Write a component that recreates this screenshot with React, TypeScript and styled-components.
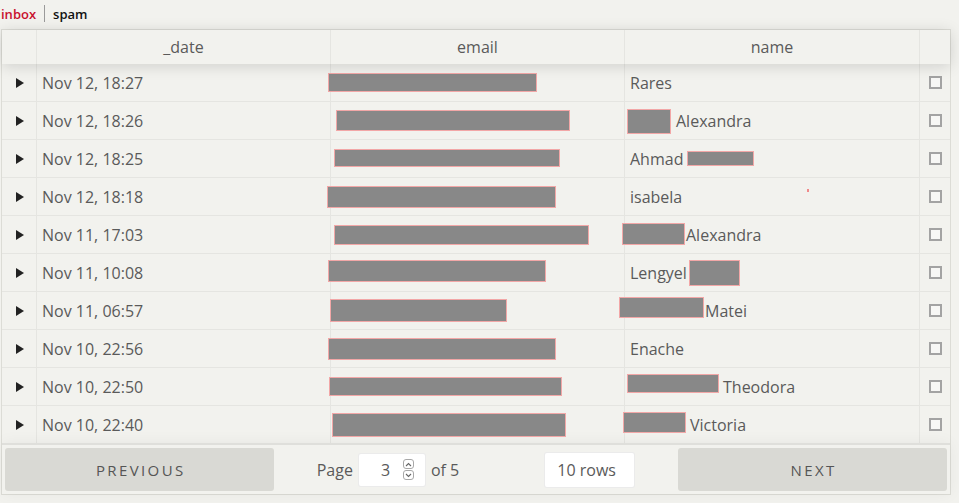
import React from "react";
import styled, { createGlobalStyle } from "styled-components";

const Global = createGlobalStyle`
  html, body { margin: 0; padding: 0; background: #f2f2ee; }
  body { font-family: "Open Sans", "Noto Sans", sans-serif; color: #555; }
  * { box-sizing: border-box; }
`;

const Page = styled.div`
  width: 959px;
  height: 503px;
  background: #f2f2ee;
`;

const TopBar = styled.div`
  height: 29px;
  display: flex;
  align-items: center;
  padding-left: 1px;
  padding-bottom: 2px;
  font-size: 13px;
  font-weight: 600;
  gap: 8px;
`;

const Tab = styled.span<{ $active?: boolean }>`
  color: ${(p) => (p.$active ? "#c8102e" : "#111")};
`;

const Sep = styled.span`
  width: 1px;
  height: 17px;
  background: #9a9a9a;
`;

const Table = styled.div`
  margin-left: 1px;
  width: 950px;
  border: 1px solid #dcdcd6;
  display: flex;
  flex-direction: column;
`;

const GRID = "35px 294px 294px 295px 1fr";

const HeaderRow = styled.div`
  display: grid;
  grid-template-columns: ${GRID};
  height: 34px;
  box-shadow: 0 2px 15px 0 rgba(0, 0, 0, 0.15);
  position: relative;
  z-index: 1;
`;

const HeadCell = styled.div`
  display: flex;
  align-items: center;
  justify-content: center;
  border-right: 1px solid rgba(0, 0, 0, 0.05);
  font-size: 16px;
  color: #5a5a5a;
  padding-bottom: 1px;
  &:last-child { border-right: none; }
`;

const Body = styled.div`
  display: flex;
  flex-direction: column;
`;

const Row = styled.div`
  display: grid;
  grid-template-columns: ${GRID};
  height: 38px;
  border-bottom: 1px solid rgba(0, 0, 0, 0.05);
  &:last-child { height: 37px; border-bottom: none; }
`;

const Cell = styled.div<{ $center?: boolean }>`
  display: flex;
  align-items: center;
  justify-content: ${(p) => (p.$center ? "center" : "flex-start")};
  padding: 0 5px;
  border-right: 1px solid rgba(0, 0, 0, 0.05);
  font-size: 16px;
  color: #5a5a5a;
  white-space: nowrap;
  &:last-child { border-right: none; }
`;

const Expander = styled.span`
  width: 0;
  height: 0;
  border-left: 8px solid #222;
  border-top: 5px solid transparent;
  border-bottom: 5px solid transparent;
  margin-left: 2px;
`;

const Redact = styled.span<{ $w: number; $h: number; $ml: number; $mr: number; $dy: number }>`
  display: inline-block;
  flex: none;
  width: ${(p) => p.$w}px;
  height: ${(p) => p.$h}px;
  margin-left: ${(p) => p.$ml}px;
  margin-right: ${(p) => p.$mr}px;
  transform: translateY(${(p) => p.$dy}px);
  background: #888;
  border: 1px solid #f2a7a7;
`;

const Box = styled.span`
  width: 13px;
  height: 13px;
  border: 2px solid #a3a3a3;
  background: #f7f7f5;
`;

const Dot = styled.span`
  width: 2px;
  height: 3px;
  background: #f08a8a;
  margin-left: 125px;
  transform: translateY(-6px);
`;

const Pagination = styled.div`
  display: flex;
  align-items: stretch;
  border-top: 2px solid rgba(0, 0, 0, 0.08);
  padding: 3px;
  height: 51px;
  box-shadow: 0 0 15px 0 rgba(0, 0, 0, 0.05);
`;

const NavButton = styled.button`
  flex: 1;
  border: none;
  border-radius: 3px;
  background: #d9d9d4;
  color: #555;
  font-family: "Open Sans", "Noto Sans", sans-serif;
  font-size: 15px;
  letter-spacing: 2.4px;
  text-indent: 2.4px;
  text-transform: uppercase;
  padding: 0;
  cursor: pointer;
`;

const Center = styled.div`
  flex: 1.5;
  display: flex;
  align-items: center;
  justify-content: space-around;
`;

const PageInfo = styled.div`
  display: flex;
  align-items: center;
  font-size: 16px;
  color: #5a5a5a;
`;

const PageInput = styled.div`
  width: 68px;
  height: 34px;
  margin: 0 5px;
  background: #fff;
  border: 1px solid rgba(0, 0, 0, 0.08);
  border-radius: 3px;
  display: flex;
  align-items: center;
  padding-left: 22px;
  gap: 13px;
`;

const Spinner = styled.div`
  display: flex;
  flex-direction: column;
  gap: 1px;
`;

const SpinBtn = styled.span`
  width: 11px;
  height: 10px;
  border: 1px solid #a8a8a8;
  border-radius: 3px;
  display: flex;
  align-items: center;
  justify-content: center;
`;

const Select = styled.div`
  width: 91px;
  height: 36px;
  background: #fff;
  border: 1px solid rgba(0, 0, 0, 0.08);
  border-radius: 3px;
  display: flex;
  align-items: center;
  padding-left: 12px;
  font-size: 16px;
  color: #5a5a5a;
`;

type R = { w: number; h: number; ml?: number; mr?: number; dy?: number };
type RowData = {
  date: string;
  email: R;
  name: { pre?: R; text: string; post?: R; dot?: boolean };
};

const rows: RowData[] = [
  { date: "Nov 12, 18:27", email: { w: 209, h: 19, ml: -8 }, name: { text: "Rares" } },
  { date: "Nov 12, 18:26", email: { w: 234, h: 21, ml: 0 }, name: { pre: { w: 44, h: 25, ml: -3, mr: 5, dy: 1 }, text: "Alexandra" } },
  { date: "Nov 12, 18:25", email: { w: 226, h: 18, ml: -2, dy: -1 }, name: { text: "Ahmad", post: { w: 67, h: 15, ml: 4, dy: 0 } } },
  { date: "Nov 12, 18:18", email: { w: 229, h: 22, ml: -9 }, name: { text: "isabela", dot: true } },
  { date: "Nov 11, 17:03", email: { w: 255, h: 20, ml: -2 }, name: { pre: { w: 63, h: 22, ml: -8, mr: 1, dy: -1 }, text: "Alexandra" } },
  { date: "Nov 11, 10:08", email: { w: 218, h: 22, ml: -8, dy: -2 }, name: { text: "Lengyel", post: { w: 51, h: 26, ml: 2, dy: 0 } } },
  { date: "Nov 11, 06:57", email: { w: 177, h: 23, ml: -6 }, name: { pre: { w: 85, h: 21, ml: -11, mr: 1, dy: -3 }, text: "Matei" } },
  { date: "Nov 10, 22:56", email: { w: 228, h: 22, ml: -8 }, name: { text: "Enache" } },
  { date: "Nov 10, 22:50", email: { w: 233, h: 19, ml: -7 }, name: { pre: { w: 92, h: 19, ml: -3, mr: 4, dy: -3 }, text: "Theodora" } },
  { date: "Nov 10, 22:40", email: { w: 234, h: 24, ml: -4 }, name: { pre: { w: 63, h: 21, ml: -7, mr: 4, dy: -2 }, text: "Victoria" } },
];

const Red = ({ r }: { r: R }) => (
  <Redact $w={r.w} $h={r.h} $ml={r.ml ?? 0} $mr={r.mr ?? 0} $dy={r.dy ?? 0} />
);

export default function App() {
  return (
    <Page>
      <Global />
      <TopBar>
        <Tab $active>inbox</Tab>
        <Sep />
        <Tab>spam</Tab>
      </TopBar>
      <Table>
        <HeaderRow>
          <HeadCell />
          <HeadCell>_date</HeadCell>
          <HeadCell>email</HeadCell>
          <HeadCell>name</HeadCell>
          <HeadCell />
        </HeaderRow>
        <Body>
          {rows.map((r) => (
            <Row key={r.date}>
              <Cell $center>
                <Expander />
              </Cell>
              <Cell>{r.date}</Cell>
              <Cell>
                <Red r={r.email} />
              </Cell>
              <Cell>
                {r.name.pre && <Red r={r.name.pre} />}
                <span>{r.name.text}</span>
                {r.name.post && <Red r={r.name.post} />}
                {r.name.dot && <Dot />}
              </Cell>
              <Cell $center>
                <Box />
              </Cell>
            </Row>
          ))}
        </Body>
        <Pagination>
          <NavButton>Previous</NavButton>
          <Center>
            <PageInfo>
              Page
              <PageInput>
                <span>3</span>
                <Spinner>
                  <SpinBtn>
                    <svg width="7" height="5" viewBox="0 0 7 5">
                      <path d="M1 4 L3.5 1.5 L6 4" fill="none" stroke="#666" strokeWidth="1.1" />
                    </svg>
                  </SpinBtn>
                  <SpinBtn>
                    <svg width="7" height="5" viewBox="0 0 7 5">
                      <path d="M1 1 L3.5 3.5 L6 1" fill="none" stroke="#666" strokeWidth="1.1" />
                    </svg>
                  </SpinBtn>
                </Spinner>
              </PageInput>
              of 5
            </PageInfo>
            <Select>10 rows</Select>
          </Center>
          <NavButton>Next</NavButton>
        </Pagination>
      </Table>
    </Page>
  );
}
